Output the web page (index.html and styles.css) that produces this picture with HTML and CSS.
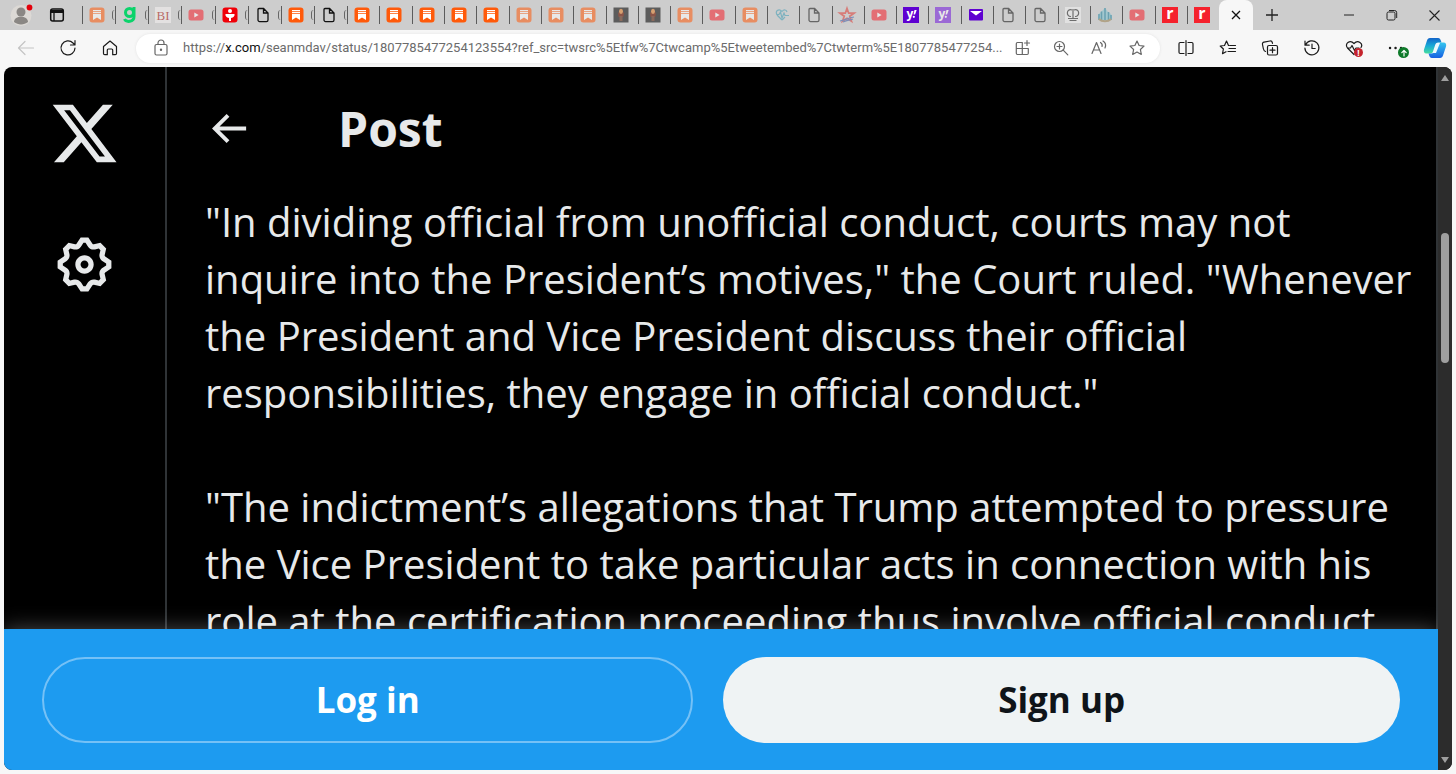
FILE: index.html
```html
<!DOCTYPE html>
<html lang="en">
<head>
  <meta charset="UTF-8" />
  <meta name="viewport" content="width=device-width, initial-scale=1.0"/>
  <title>Post / X</title>
  <link rel="stylesheet" href="styles.css">
</head>
<body>

  <!-- Shared tab icons -->
  <svg class="symbols" aria-hidden="true">
    <symbol id="substack" viewBox="0 0 16 16">
      <rect x="0.5" y="0.5" width="15" height="15" rx="3" fill="#ff5a0a"/>
      <path d="M4 3.6h8M4 5.6h8" stroke="#fff" stroke-width="1.1"/>
      <path d="M4 7h8v6l-4-2.4L4 13z" fill="#fff"/>
    </symbol>
    <symbol id="file" viewBox="0 0 16 16">
      <path d="M4 1.5h4.6L13 6v7a1.6 1.6 0 0 1-1.6 1.6H4.600A1.600 1.600 0 0 1 3 13V2.500a1 1 0 0 1 1-1zM8.500 1.800V6H13" fill="none" stroke="currentColor" stroke-width="1.300"/>
    </symbol>
    <symbol id="youtube" viewBox="0 0 16 16">
      <rect x="0.5" y="2.500" width="15" height="11" rx="2.500" fill="#f5222d"/>
      <path d="M6.300 5.500v5L10.600 8z" fill="#fff"/>
    </symbol>
    <symbol id="portrait" viewBox="0 0 16 16">
      <rect x="0.5" y="0.5" width="15" height="15" fill="#5c5c5c"/>
      <path d="M5 5.500h6l-.6 4.500H5.600z" fill="#8c5548"/>
      <ellipse cx="8" cy="4.300" rx="2" ry="2.600" fill="#d8a070"/>
      <path d="M6.500 9h3v5h-3z" fill="#8a6a5c"/>
    </symbol>
  </svg>

  <!-- Tab strip -->
  <div class="tab-strip">
    <button class="profile" aria-label="Profile">
      <svg width="24" height="24" viewBox="0 0 24 24"><circle cx="11" cy="12.500" r="10.500" fill="#dcd9d5"/><circle cx="11" cy="9" r="4.500" fill="#8a8784"/><path d="M4 19c0-7 14-7 14 0-4 3.200-10 3.200-14 0z" fill="#8a8784"/><circle cx="19.500" cy="4.500" r="2.900" fill="#e3000b"/></svg>
    </button>
    <button class="workspaces" aria-label="Tab actions">
      <svg width="16" height="16" viewBox="0 0 16 16"><rect x="1.700" y="2" width="12.600" height="12" rx="2" fill="none" stroke="#111" stroke-width="1.500"/><path d="M2 3h12v3H2z" fill="#111"/><path d="M5 6v8" stroke="#111" stroke-width="1.300"/></svg>
    </button>
    <div class="tabs">
      <button class="tab titled asleep" aria-label="Substack"><svg><use href="#substack"/></svg></button>
      <button class="tab titled" aria-label="Goodreads"><svg viewBox="0 0 16 16" fill="none" stroke="#0bd36b" stroke-width="3"><circle cx="7.500" cy="5.500" r="4"/><path d="M12 0v9.500c0 6-8 6-9.500 2.500"/></svg></button>
      <button class="tab titled asleep" aria-label="Business Insider"><svg viewBox="0 0 16 16"><rect width="16" height="16" fill="#f5f3f2"/><text x="8" y="13" class="bi">BI</text></svg></button>
      <button class="tab titled asleep" aria-label="YouTube"><svg><use href="#youtube"/></svg></button>
      <button class="tab titled" aria-label="News"><svg viewBox="0 0 16 16"><rect x="0.500" y="0.500" width="15" height="15" rx="3" fill="#f00008"/><circle cx="8" cy="4" r="2" fill="#fff"/><path d="M3.500 7h9v1.500c-1 2-2.500 2.300-3.500 2.500V14H7v-3c-1-.2-2.500-.5-3.500-2.500z" fill="#fff"/></svg></button>
      <button class="tab titled" aria-label="Document"><svg><use href="#file"/></svg></button>
      <button class="tab titled" aria-label="Substack"><svg><use href="#substack"/></svg></button>
      <button class="tab titled" aria-label="Document"><svg><use href="#file"/></svg></button>
      <button class="tab" aria-label="Substack"><svg><use href="#substack"/></svg></button>
      <button class="tab" aria-label="Substack"><svg><use href="#substack"/></svg></button>
      <button class="tab" aria-label="Substack"><svg><use href="#substack"/></svg></button>
      <button class="tab" aria-label="Substack"><svg><use href="#substack"/></svg></button>
      <button class="tab" aria-label="Substack"><svg><use href="#substack"/></svg></button>
      <button class="tab asleep" aria-label="Substack"><svg><use href="#substack"/></svg></button>
      <button class="tab asleep" aria-label="Substack"><svg><use href="#substack"/></svg></button>
      <button class="tab asleep" aria-label="Substack"><svg><use href="#substack"/></svg></button>
      <button class="tab" aria-label="Portrait"><svg><use href="#portrait"/></svg></button>
      <button class="tab" aria-label="Portrait"><svg><use href="#portrait"/></svg></button>
      <button class="tab asleep" aria-label="Substack"><svg><use href="#substack"/></svg></button>
      <button class="tab asleep" aria-label="YouTube"><svg><use href="#youtube"/></svg></button>
      <button class="tab asleep" aria-label="Substack"><svg><use href="#substack"/></svg></button>
      <button class="tab asleep" aria-label="Health"><svg viewBox="0 0 16 16" fill="none" stroke="#3f9db5" stroke-width="1.200"><path d="M8 13L3.500 8.500C0 4 5 1 8 4.500 10 2 12.500 2.800 13 5M8 13l3-3"/><path d="M3 7.500h2l1.500-2.500 1.500 6 2-5 1 2.500h4"/></svg></button>
      <button class="tab asleep" aria-label="Document"><svg><use href="#file"/></svg></button>
      <button class="tab asleep" aria-label="Star"><svg viewBox="0 0 16 16" fill="none"><path d="M8 1.500l1.700 4.700H15l-4.200 3 1.600 5L8 11.300 3.600 14.200l1.600-5L1 6.200h5.300z" stroke="#e03c35" stroke-width="1.800"/><path d="M1 14c5-1 8-3 14-4M4 15c4-2 7-2 10-3" stroke="#3a5ba8" stroke-width="1.200"/></svg></button>
      <button class="tab asleep" aria-label="YouTube"><svg><use href="#youtube"/></svg></button>
      <button class="tab" aria-label="Yahoo"><svg viewBox="0 0 16 16"><rect width="16" height="16" fill="#5f01d1"/><text x="7" y="11" class="yahoo">y</text><path d="M11.500 3h2.200l-1.600 4.500h-1.600z" fill="#fff"/><circle cx="10.800" cy="9.800" r="1.100" fill="#fff"/></svg></button>
      <button class="tab asleep" aria-label="Yahoo"><svg viewBox="0 0 16 16"><rect width="16" height="16" fill="#7318dd"/><text x="7" y="11" class="yahoo">y</text><path d="M11.500 3h2.200l-1.600 4.500h-1.600z" fill="#fff"/><circle cx="10.800" cy="9.800" r="1.100" fill="#fff"/></svg></button>
      <button class="tab" aria-label="Yahoo Mail"><svg viewBox="0 0 16 16"><rect x="1" y="2" width="14" height="11.500" rx="1" fill="#5f01d1"/><path d="M2 4h12L8 8.500z" fill="#fff"/></svg></button>
      <button class="tab asleep" aria-label="Document"><svg><use href="#file"/></svg></button>
      <button class="tab asleep" aria-label="Document"><svg><use href="#file"/></svg></button>
      <button class="tab asleep" aria-label="Journal"><svg viewBox="0 0 16 16" fill="none" stroke="#222" stroke-width="1.200"><rect width="16" height="16" fill="#f2f2f2" stroke="none"/><path d="M8 2v9M7 3C1 1 1 10 6 9.500M9 3c6-2 6 7 1 6.500M3 11.500h10M4.500 13.500h7"/></svg></button>
      <button class="tab asleep" aria-label="City"><svg viewBox="0 0 16 16" fill="none"><path d="M1 9c1-3 3-4 4-5l3-3 3 4c3 1 4 3 4 6-4 4-10 4-14 0z" fill="#7fc3d1"/><path d="M2 13V7M4.500 13V4.500M8 13V1M11.500 13V5M14 13V8" stroke="#1a7d99" stroke-width="1.500"/><path d="M2 12c3 3 9 3 12 0" stroke="#9b814f" stroke-width="2"/></svg></button>
      <button class="tab asleep" aria-label="YouTube"><svg><use href="#youtube"/></svg></button>
      <button class="tab" aria-label="Raw Story"><svg viewBox="0 0 16 16"><rect width="16" height="16" fill="#f5222d"/><text x="8" y="12" class="raw">r</text></svg></button>
      <button class="tab" aria-label="Raw Story"><svg viewBox="0 0 16 16"><rect width="16" height="16" fill="#f5222d"/><text x="8" y="12" class="raw">r</text></svg></button>
    </div>
    <button class="tab-active" aria-label="Close tab"><svg width="10" height="10" viewBox="0 0 10 10"><path d="M1 1l8 8M9 1L1 9" stroke="#111" stroke-width="1.300"/></svg></button>
    <button class="new-tab" aria-label="New tab"><svg width="14" height="14" viewBox="0 0 14 14"><path d="M7 1v12M1 7h12" stroke="#222" stroke-width="1.300"/></svg></button>
    <div class="window-controls">
      <button aria-label="Minimize"><svg width="10" height="10" viewBox="0 0 10 10"><path d="M0 5h10" stroke="#222"/></svg></button>
      <button aria-label="Restore"><svg width="12" height="12" viewBox="0 0 12 12" fill="none" stroke="#222"><rect x="1" y="3" width="8" height="8" rx="1.500"/><path d="M3 1.500h5.500a2.200 2.200 0 0 1 2.200 2.200V9"/></svg></button>
      <button aria-label="Close"><svg width="11" height="11" viewBox="0 0 11 11"><path d="M.5.5l10 10M10.500.5l-10 10" stroke="#222" stroke-width="1.100"/></svg></button>
    </div>
  </div>

  <!-- Toolbar -->
  <div class="toolbar">
    <button class="tool back" aria-label="Back"><svg viewBox="0 0 18 18"><path d="M16.500 9h-15M8 2.500L1.500 9 8 15.500"/></svg></button>
    <button class="tool" aria-label="Refresh"><svg viewBox="0 0 18 18"><path d="M16 9a7 7 0 1 1-2-5l1.800 1.800M16 1.500V6h-4.500"/></svg></button>
    <button class="tool" aria-label="Home"><svg viewBox="0 0 18 18"><path d="M2.500 7.500L9 2l6.500 5.500v7a1.200 1.200 0 0 1-1.200 1.200h-2.600V11a1 1 0 0 0-1-1H7.300a1 1 0 0 0-1 1v4.700H3.700a1.200 1.200 0 0 1-1.200-1.200z"/></svg></button>
    <div class="address">
      <button class="tool grey" aria-label="Site information"><svg viewBox="0 0 18 18"><rect x="3" y="5.500" width="12" height="10.500" rx="1.500"/><path d="M6 5.500V4a3 3 0 0 1 6 0v1.500"/><circle cx="9" cy="10.700" r=".6" fill="currentColor"/></svg></button>
      <div class="url">https://<b>x.com</b>/seanmdav/status/1807785477254123554?ref_src=twsrc%5Etfw%7Ctwcamp%5Etweetembed%7Ctwterm%5E1807785477254...</div>
      <button class="tool grey" aria-label="App available"><svg viewBox="0 0 18 18"><path d="M8 3.500H3.500A1.200 1.200 0 0 0 2.300 4.700v9.600a1.200 1.200 0 0 0 1.200 1.200h9.600a1.200 1.200 0 0 0 1.200-1.200V9.500M2.300 9.500h12M8.300 3.500v12M13 1.500v5M10.500 4h5"/></svg></button>
      <button class="tool grey" aria-label="Zoom"><svg viewBox="0 0 18 18"><circle cx="7.500" cy="7.500" r="5"/><path d="M11.200 11.200l4.600 4.600M7.500 5v5M5 7.500h5"/></svg></button>
      <button class="tool grey" aria-label="Read aloud"><svg viewBox="0 0 18 18"><path d="M2 14.500L6.500 3.500 11 14.500M3.500 11h6M10.500 3.500c1.500 1 2 2.500 1.500 4M13 2c2.500 1.500 3 4.500 2 7"/></svg></button>
      <button class="tool grey" aria-label="Add to favorites"><svg viewBox="0 0 18 18"><path d="M9 2l2.100 4.500 4.900.6-3.600 3.400.9 4.900L9 13l-4.300 2.400.9-4.900L2 7.100l4.900-.6z"/></svg></button>
    </div>
    <button class="tool" aria-label="Split screen"><svg viewBox="0 0 18 18"><path d="M7 3.500H3.200A1.200 1.200 0 0 0 2 4.700v8.600a1.200 1.200 0 0 0 1.200 1.200H7M11 3.500h3.800A1.200 1.200 0 0 1 16 4.700v8.600a1.200 1.200 0 0 1-1.200 1.200H11M9 1.500v15"/></svg></button>
    <button class="tool" aria-label="Favorites"><svg viewBox="0 0 18 18"><path d="M10 6.500h-.5L7.500 2 5.500 6.500l-4.300.5 3.200 3-.9 4.700 3.500-2M11 6.500h5.500M10 9.500h6.500M9 12.500h7.500"/></svg></button>
    <button class="tool" aria-label="Collections"><svg viewBox="0 0 18 18"><rect x="6.500" y="6.500" width="10" height="9.500" rx="1.500"/><path d="M11.500 8.700v5M9 11.200h5M4.500 12.500C3 12 2.600 11 2.300 9.500L1.500 5.500C1.200 4 2 3.400 3 3.200l6-1.200c1.300-.2 2 .3 2.300 1.500l.2 1"/></svg></button>
    <button class="tool" aria-label="History"><svg viewBox="0 0 18 18"><path d="M2.500 6a7 7 0 1 1-.6 3M2 2v4.200h4.200M9 5v4.500h3.200"/></svg></button>
    <button class="tool" aria-label="Browser essentials"><svg viewBox="0 0 18 18"><path d="M9 15.500L2.500 9C-1 4.500 5 .5 9 4.500c4-4 9.500 0 7 4M2.500 9h3L7 6.500l2.500 5L11 9h3"/></svg><span class="badge alert">!</span></button>
    <button class="tool" aria-label="Settings and more"><svg viewBox="0 0 18 18"><path d="M3 9h.1M8.500 9h.1M14 9h.1" stroke-width="2.400"/></svg><span class="badge update"><svg viewBox="0 0 10 10"><path d="M5 8V2.500M2.800 4.700L5 2.500l2.200 2.200"/></svg></span></button>
    <button class="copilot" aria-label="Copilot">
      <svg width="24" height="24" viewBox="0 0 24 24">
        <defs>
          <linearGradient id="cpA" x1="0" y1="0" x2="0" y2="1"><stop offset="0" stop-color="#1264c9"/><stop offset=".5" stop-color="#17a9d6"/><stop offset="1" stop-color="#46dda0"/></linearGradient>
          <linearGradient id="cpB" x1="0" y1="0" x2="0" y2="1"><stop offset="0" stop-color="#35c7ef"/><stop offset="1" stop-color="#1560e2"/></linearGradient>
        </defs>
        <path d="M7 2h8c2 0 2.500 1.500 3 3l.5 1.500h-3c-2 0-3 1.300-3.500 3l-2 6c-.5 1.500-1.500 2-3 2H3.500C1 17.500.500 15.500 1 13.500L4 4.500C4.500 3 5.300 2 7 2z" fill="url(#cpA)"/>
        <path d="M17 22H9c-2 0-2.500-1.500-3-3l-.5-1.500h3c2 0 3-1.300 3.500-3l2-6c.5-1.500 1.500-2 3-2h3.500c2.500 0 3 2 2.500 4l-3 9c-.5 1.500-1.300 2.500-3 2.500z" fill="url(#cpB)"/>
        <path d="M14 7h3l-4 10h-3z" fill="#eafaff"/>
      </svg>
    </button>
  </div>

  <!-- Page -->
  <div class="viewport">
    <div class="page">
      <div class="content">
        <nav class="sidebar">
          <a href="#" aria-label="X"><svg width="71" height="71" viewBox="0 0 24 24"><path d="M18.244 2.250h3.308l-7.227 8.260 8.502 11.240H16.170l-5.214-6.817L4.990 21.750H1.680l7.730-8.835L1.254 2.250H8.080l4.713 6.231zm-1.161 17.520h1.833L7.084 4.126H5.117z"/></svg></a>
          <a href="#" aria-label="Settings"><svg width="63" height="63" viewBox="0 0 24 24"><path d="M10.540 1.750h2.920l1.570 2.360c.11.170.32.250.53.210l2.530-.59 2.170 2.170-.58 2.540c-.05.200.04.410.21.530l2.360 1.570v2.920l-2.360 1.570c-.17.120-.26.330-.21.530l.58 2.540-2.170 2.170-2.530-.59c-.21-.04-.42.040-.53.210l-1.570 2.360h-2.920l-1.580-2.360c-.11-.17-.32-.25-.52-.21l-2.540.59-2.170-2.170.58-2.540c.05-.2-.03-.41-.21-.53l-2.350-1.570v-2.920L4.100 8.970c.18-.12.26-.33.21-.53L3.730 5.900 5.900 3.730l2.540.59c.2.040.41-.04.52-.21l1.580-2.360zm1.070 2l-.98 1.470C10.050 6.080 9 6.500 7.990 6.270l-1.460-.34-.6.6.33 1.460c.24 1.010-.18 2.070-1.050 2.640l-1.460.98v.78l1.460.98c.87.57 1.290 1.630 1.050 2.640l-.33 1.460.6.6 1.460-.34c1.010-.23 2.060.19 2.640 1.050l.98 1.470h.78l.97-1.470c.58-.86 1.630-1.280 2.650-1.050l1.450.34.61-.6-.34-1.460c-.23-1.010.18-2.070 1.050-2.640l1.470-.98v-.78l-1.470-.98c-.87-.57-1.280-1.630-1.050-2.640l.34-1.460-.61-.6-1.450.34c-1.020.23-2.070-.19-2.650-1.050l-.97-1.470h-.78zM12 10.500c-.83 0-1.500.67-1.500 1.500s.67 1.500 1.500 1.500c.83 0 1.500-.67 1.500-1.500s-.67-1.500-1.500-1.500zM8.500 12c0-1.930 1.560-3.500 3.500-3.500 1.930 0 3.500 1.570 3.500 3.500s-1.570 3.500-3.500 3.500c-1.940 0-3.500-1.570-3.500-3.500z"/></svg></a>
        </nav>
        <main class="post">
          <header class="post-header">
            <button aria-label="Back"><svg width="47" height="47" viewBox="0 0 24 24"><path d="M7.414 13l5.043 5.040-1.414 1.420L3.586 12l7.457-7.460 1.414 1.420L7.414 11H21v2H7.414z"/></svg></button>
            <h1>Post</h1>
          </header>
          <p>"In dividing official from unofficial conduct, courts may not<br>inquire into the President’s motives," the Court ruled. "Whenever<br>the President and Vice President discuss their official<br>responsibilities, they engage in official conduct."</p>
          <p>"The indictment’s allegations that Trump attempted to pressure<br>the Vice President to take particular acts in connection with his<br>role at the certification proceeding thus involve official conduct</p>
        </main>
      </div>
      <div class="login-bar">
        <button class="login">Log in</button>
        <button class="signup">Sign up</button>
      </div>
    </div>
    <div class="scrollbar">
      <svg width="10" height="8" viewBox="0 0 10 8"><path d="M5 1l4 6H1z"/></svg>
      <div class="track"><div class="thumb"></div></div>
      <svg width="10" height="8" viewBox="0 0 10 8"><path d="M5 7L1 1h8z"/></svg>
    </div>
  </div>

</body>
</html>
```
FILE: styles.css
```css
* {
  box-sizing: border-box;
}

body {
  margin: 0;
  height: 100vh;
  display: flex;
  flex-direction: column;
  overflow: hidden;
  background: #f7f7f7;
  font-family: "Open Sans", "Noto Sans", sans-serif;
}

button {
  display: flex;
  align-items: center;
  justify-content: center;
  padding: 0;
  border: none;
  background: none;
  color: inherit;
  font-family: inherit;
  cursor: pointer;
}

.symbols {
  display: none;
}

/* Tab strip */
.tab-strip {
  display: flex;
  flex: none;
  height: 30px;
  background: #cdcdcd;
}

.profile {
  width: 44px;
}

.workspaces {
  width: 26px;
  margin-right: 12px;
}

.tabs {
  display: flex;
  flex: 1;
}

.tab {
  flex: 30;
  justify-content: flex-start;
  padding-left: 7px;
  background: linear-gradient(#5c5c5c, #5c5c5c) left center / 1px 18px no-repeat;
  color: #111;
}

/* wide enough to show the edge of the title */
.titled {
  flex: 31;
}

.titled::after {
  content: "";
  width: 2px;
  height: 10px;
  margin-left: auto;
  border-left: 1px solid #666;
  border-radius: 3px 0 0 3px;
}

.tab svg {
  width: 16px;
  height: 16px;
  overflow: visible;
}

.asleep svg {
  opacity: 0.55;
}

.bi {
  font: 13px "Liberation Serif", serif;
  fill: #a8140a;
  text-anchor: middle;
}

.yahoo,
.raw {
  font: bold 12px "Open Sans", sans-serif;
  fill: #fff;
  text-anchor: middle;
}

.raw {
  font-size: 16px;
}

.tab-active {
  width: 34px;
  border-radius: 8px 8px 0 0;
  background: #f7f7f7;
}

.new-tab {
  width: 38px;
}

.window-controls {
  display: flex;
  margin-left: 36px;
}

.window-controls button {
  width: 43px;
}

/* Toolbar */
.toolbar {
  display: flex;
  flex: none;
  align-items: center;
  height: 37px;
  padding: 0 3px 1px 5px;
}

.tool {
  position: relative;
  flex: none;
  width: 42px;
  height: 30px;
  color: #1b1b1b;
}

.tool svg {
  width: 18px;
  height: 18px;
  fill: none;
  stroke: currentColor;
  stroke-width: 1.2;
  stroke-linecap: round;
  stroke-linejoin: round;
}

.back {
  color: #c4c4c4;
}

.address {
  display: flex;
  flex: 1;
  align-items: center;
  min-width: 0;
  height: 29px;
  margin: 0 5px;
  padding: 0 4px 0 6px;
  border-radius: 15px;
  background: #fff;
  box-shadow: 0 0 3px #e2e2e2;
}

.address .tool {
  width: 38px;
}

.grey {
  color: #666;
}

.url {
  flex: 1;
  min-width: 0;
  padding-left: 3px;
  color: #6b6b6b;
  font-family: Roboto, sans-serif;
  font-size: 13px;
  line-height: 20px;
  white-space: nowrap;
}

.url b {
  color: #111;
  font-weight: normal;
}

.badge {
  position: absolute;
  right: 12px;
  bottom: 6px;
  display: flex;
  align-items: center;
  justify-content: center;
  width: 9px;
  height: 9px;
  border-radius: 50%;
  background: #c4232c;
  color: #fff;
  font-size: 8px;
  font-weight: bold;
}

.update {
  right: 8px;
  bottom: 5px;
  width: 11px;
  height: 11px;
  background: #0e7a2a;
}

.update svg {
  width: 10px;
  height: 10px;
}

.copilot {
  width: 36px;
}

/* Page */
.viewport {
  display: flex;
  flex: 1;
  min-height: 0;
  margin: 0 4px 4px;
  border-radius: 8px;
  overflow: hidden;
  background: #000;
}

.page {
  display: flex;
  flex: 1;
  flex-direction: column;
  min-width: 0;
}

.content {
  display: flex;
  flex: 1;
  min-height: 0;
  overflow: hidden;
}

.sidebar {
  display: flex;
  flex: none;
  flex-direction: column;
  align-items: center;
  gap: 64px;
  width: 163px;
  padding-top: 31px;
  border-right: 2px solid #2f3336;
}

.sidebar svg,
.post-header svg {
  display: block;
  fill: #e7e9ea;
}

.post {
  flex: 1;
  min-width: 0;
  padding-left: 38px;
  border-right: 2px solid #2f3336;
  color: #e7e9ea;
}

.post-header {
  display: flex;
  align-items: center;
  gap: 86px;
  height: 122px;
  margin-bottom: 4px;
}

.post-header h1 {
  margin: 0;
  font-size: 48px;
  line-height: 57px;
}

.post p {
  margin: 0 0 57px;
  font-size: 40px;
  line-height: 57px;
  white-space: nowrap;
}

.login-bar {
  display: flex;
  flex: none;
  gap: 30px;
  padding: 28px 38px 27px;
  background: #1d9bf0;
  box-shadow: 0 0 20px rgba(255, 255, 255, 0.3);
}

.login-bar button {
  height: 86px;
  padding-bottom: 2px;
  border-radius: 43px;
  font-size: 35px;
  font-weight: bold;
}

.login-bar .login {
  flex: 22;
  border: 2px solid #75c1f6;
  color: #fff;
}

.login-bar .signup {
  flex: 23;
  background: #eff3f4;
  color: #0f1419;
}

/* Scrollbar */
.scrollbar {
  display: flex;
  flex: none;
  flex-direction: column;
  align-items: center;
  width: 14px;
  padding: 7px 0 6px;
  background: #2c2c2c;
}

.scrollbar svg {
  fill: #9f9f9f;
}

.track {
  flex: 1;
}

.thumb {
  width: 8px;
  height: 130px;
  margin-top: 151px;
  border-radius: 4px;
  background: #9f9f9f;
}
```
